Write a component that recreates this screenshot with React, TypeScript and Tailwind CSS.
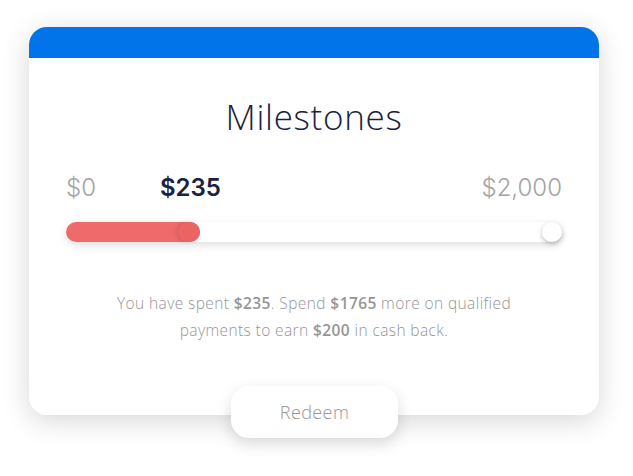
export default function App() {
  const spent = 235;
  const goal = 2000;
  const pct = 27;

  return (
    <div className="w-[633px] h-[476px] bg-white flex flex-col items-start pl-[29px] pt-[27px]" style={{ fontFamily: "'Open Sans', sans-serif" }}>
      {/* Card */}
      <div className="w-[570px] h-[388px] rounded-[18px] bg-white overflow-hidden shadow-[0_6px_28px_rgba(0,0,0,0.16)] flex flex-col">
        <div className="h-[31px] bg-[#0074e8] shrink-0" />
        <h1 className="mt-[39px] text-center text-[35px] leading-[40px] font-light text-[#1b2140] tracking-[0.7px]">
          Milestones
        </h1>

        <div className="mx-[37px] mt-[36px] flex items-end text-[24px] leading-[30px]" style={{ fontFamily: "Inter, sans-serif" }}>
          <span className="text-[#a3a3a3] font-light">$0</span>
          <span className="ml-[64px] font-semibold text-[#1b2140]">${spent}</span>
          <span className="ml-auto text-[#a3a3a3] font-light">$2,000</span>
        </div>

        {/* Track */}
        <div className="mx-[37px] mt-[19px] relative h-[20px] rounded-full bg-white shadow-[0_3px_8px_rgba(0,0,0,0.13)]">
          <div className="h-full rounded-full bg-[#ef6a6a] relative" style={{ width: `${pct}%` }}>
            <div className="absolute right-0 top-0 w-[22px] h-[20px] rounded-full bg-[#ea6464] shadow-[-2px_0_4px_rgba(0,0,0,0.12)]" />
          </div>
          <div className="absolute right-0 top-0 w-[20px] h-[20px] rounded-full bg-white shadow-[0_2px_5px_rgba(0,0,0,0.25)]" />
        </div>

        <p className="mt-[48px] mx-auto w-[420px] text-center text-[15.5px] leading-[27px] text-[#959595] font-light tracking-[0.4px]">
          You have spent <b className="font-semibold">${spent}</b>. Spend <b className="font-semibold">${goal - spent}</b> more on qualified payments to earn <b className="font-semibold">$200</b> in cash back.
        </p>
      </div>

      {/* Redeem */}
      <button className="ml-[202px] -mt-[29px] w-[167px] h-[52px] rounded-[18px] bg-white shadow-[0_6px_16px_rgba(0,0,0,0.14)] text-[18px] text-[#959595] font-light tracking-[0.4px]">
        Redeem
      </button>
    </div>
  );
}
